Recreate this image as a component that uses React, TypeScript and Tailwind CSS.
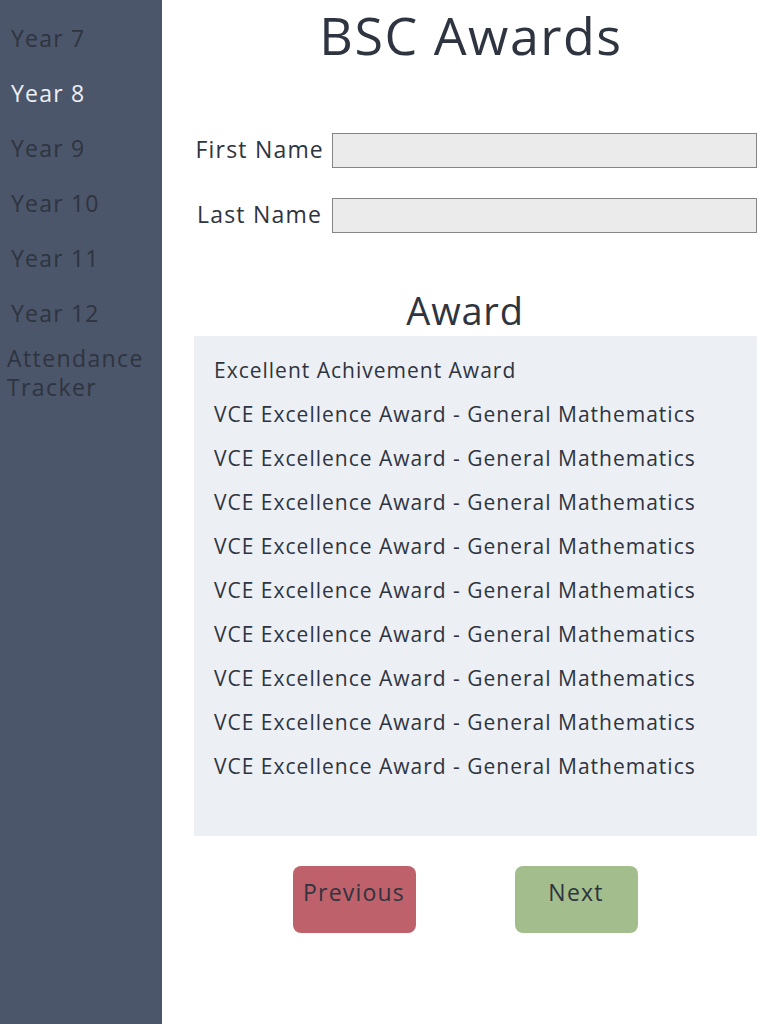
import { useState } from "react";

const years = ["Year 7", "Year 8", "Year 9", "Year 10", "Year 11", "Year 12"];

const awards = [
  "Excellent Achivement Award",
  "VCE Excellence Award - General Mathematics",
  "VCE Excellence Award - General Mathematics",
  "VCE Excellence Award - General Mathematics",
  "VCE Excellence Award - General Mathematics",
  "VCE Excellence Award - General Mathematics",
  "VCE Excellence Award - General Mathematics",
  "VCE Excellence Award - General Mathematics",
  "VCE Excellence Award - General Mathematics",
  "VCE Excellence Award - General Mathematics",
];

export default function App() {
  const [active] = useState("Year 8");
  const [first, setFirst] = useState("");
  const [last, setLast] = useState("");

  return (
    <div className="flex h-[1024px] w-full bg-white text-[#2e3440] font-['Open_Sans',sans-serif]">
      {/* sidebar */}
      <nav className="w-[162px] shrink-0 bg-[#4c566a] pt-[11px]">
        {years.map((y) => (
          <div
            key={y}
            className={`flex h-[55px] items-center pl-[11px] text-[23px] tracking-[1.2px] ${
              y === active ? "text-[#eceff4]" : "text-[#2e3440]"
            }`}
          >
            {y}
          </div>
        ))}
        <div className="mt-[3px] pl-[7px] text-[23px] leading-[29px] tracking-[1.4px]">
          Attendance
          <br />
          Tracker
        </div>
      </nav>

      <main className="flex flex-1 flex-col pr-[11px]">
        <h1 className="flex h-[70px] items-center justify-center pl-[23px] text-[52px] leading-none tracking-[1.5px]">
          BSC Awards
        </h1>

        <div className="mt-[63px] flex flex-col gap-[30px]">
          <div className="flex h-[35px] items-center">
            <label className="w-[170px] shrink-0 -translate-y-[2px] pr-[8px] text-right text-[23px] leading-[30px] tracking-[1.2px]">
              First Name
            </label>
            <input
              value={first}
              onChange={(e) => setFirst(e.target.value)}
              className="h-[35px] flex-1 border border-[#858585] bg-[#ebebeb] px-2 outline-none"
            />
          </div>
          <div className="flex h-[35px] items-center">
            <label className="w-[170px] shrink-0 -translate-y-[2px] pr-[10px] text-right text-[23px] leading-[30px] tracking-[1.2px]">
              Last Name
            </label>
            <input
              value={last}
              onChange={(e) => setLast(e.target.value)}
              className="h-[35px] flex-1 border border-[#858585] bg-[#ebebeb] px-2 outline-none"
            />
          </div>
        </div>

        <h2 className="mt-[54px] flex h-[49px] items-center justify-center pb-[4px] pl-[11px] text-[38px] leading-none tracking-[0.8px]">
          Award
        </h2>

        <ul className="ml-[32px] h-[500px] bg-[#eceff4] pl-[20px] pt-[13px]">
          {awards.map((a, i) => (
            <li key={i} className="flex h-[44px] items-center text-[21px] tracking-[1px]">
              {a}
            </li>
          ))}
        </ul>

        <div className="mt-[30px] flex justify-center gap-[99px] pl-[11px]">
          <button className="flex h-[67px] w-[123px] justify-center rounded-[8px] bg-[#bf616a] pt-[11px] text-[23px] leading-[30px] tracking-[1.2px]">
            Previous
          </button>
          <button className="flex h-[67px] w-[123px] justify-center rounded-[8px] bg-[#a3be8c] pt-[11px] text-[23px] leading-[30px] tracking-[1.2px]">
            Next
          </button>
        </div>
      </main>
    </div>
  );
}
